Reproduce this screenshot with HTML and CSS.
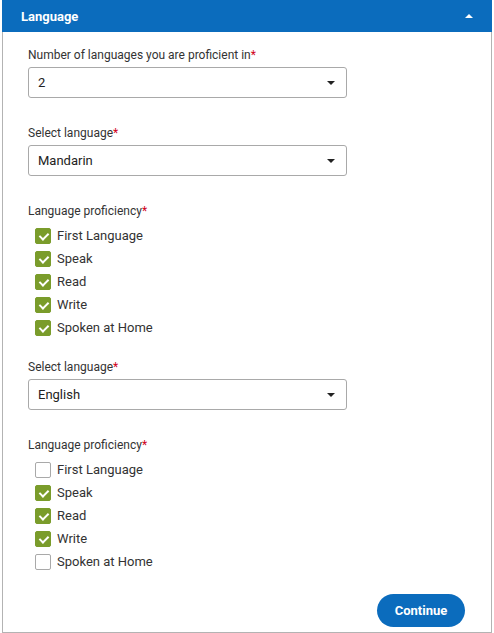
FILE: index.html
```html
<!DOCTYPE html>
<html lang="en">
<head>
<meta charset="utf-8">
<title>Language</title>
<link rel="stylesheet" href="styles.css">
</head>
<body>
<section class="panel">
  <header class="panel-head">
    <h2 class="panel-title">Language</h2>
    <span class="caret-up"></span>
  </header>
  <div class="panel-body">
    <div class="field">
      <label class="field-label">Number of languages you are proficient in<span class="req">*</span></label>
      <div class="select"><span>2</span><span class="caret-down"></span></div>
    </div>
    <div class="field">
      <label class="field-label">Select language<span class="req">*</span></label>
      <div class="select"><span>Mandarin</span><span class="caret-down"></span></div>
    </div>
    <div class="field field-checks">
      <label class="field-label">Language proficiency<span class="req">*</span></label>
      <ul class="checks">
        <li class="check"><span class="box on"></span>First Language</li>
        <li class="check"><span class="box on"></span>Speak</li>
        <li class="check"><span class="box on"></span>Read</li>
        <li class="check"><span class="box on"></span>Write</li>
        <li class="check"><span class="box on"></span>Spoken at Home</li>
      </ul>
    </div>
    <div class="field">
      <label class="field-label">Select language<span class="req">*</span></label>
      <div class="select"><span>English</span><span class="caret-down"></span></div>
    </div>
    <div class="field field-checks">
      <label class="field-label">Language proficiency<span class="req">*</span></label>
      <ul class="checks">
        <li class="check"><span class="box"></span>First Language</li>
        <li class="check"><span class="box on"></span>Speak</li>
        <li class="check"><span class="box on"></span>Read</li>
        <li class="check"><span class="box on"></span>Write</li>
        <li class="check"><span class="box"></span>Spoken at Home</li>
      </ul>
    </div>
    <div class="actions">
      <button class="btn">Continue</button>
    </div>
  </div>
</section>
</body>
</html>
```

FILE: styles.css
```css
html, body {
  margin: 0;
  padding: 0;
  background: #ffffff;
}
body {
  font-family: Roboto, "Liberation Sans", Arial, sans-serif;
  color: #333333;
  font-size: 13px;
}
.panel {
  margin-left: 2px;
  width: 490px;
  box-sizing: border-box;
  border-left: 1px solid #b3b3b3;
  border-right: 1px solid #b3b3b3;
  border-bottom: 1px solid #b3b3b3;
  min-height: 633px;
}
.panel-head {
  background: #0b6cbd;
  height: 32px;
  margin-left: -1px;
  margin-right: -1px;
  display: flex;
  align-items: center;
  justify-content: space-between;
  padding: 0 19px 0 19px;
  box-sizing: border-box;
}
.panel-title {
  margin: 0;
  color: #ffffff;
  font-size: 13px;
  font-weight: 700;
}
.caret-up {
  width: 0;
  height: 0;
  border-left: 4px solid transparent;
  border-right: 4px solid transparent;
  border-bottom: 4px solid #ffffff;
  margin-top: -1px;
}
.panel-body {
  padding: 16px 26px 0 25px;
}
.field {
  margin-bottom: 28px;
}
.field-label {
  display: block;
  font-size: 12px;
  line-height: 14px;
  margin-bottom: 5px;
  color: #333333;
}
.req {
  color: #d0021b;
}
.select {
  width: 319px;
  height: 31px;
  box-sizing: border-box;
  border: 1px solid #a9a9a9;
  border-radius: 3px;
  display: flex;
  align-items: center;
  justify-content: space-between;
  padding: 0 11px 0 9px;
  font-size: 13px;
  color: #222222;
}
.caret-down {
  width: 0;
  height: 0;
  border-left: 4px solid transparent;
  border-right: 4px solid transparent;
  border-top: 4px solid #222222;
}
.field-checks {
  margin-bottom: 21px;
}
.checks {
  list-style: none;
  margin: 6px 0 0 0;
  padding: 0 0 0 7px;
}
.check {
  display: flex;
  align-items: center;
  height: 23px;
  gap: 6px;
  color: #333333;
}
.box {
  width: 16px;
  height: 16px;
  box-sizing: border-box;
  border: 1px solid #a9a9a9;
  border-radius: 2px;
  background: #ffffff;
  position: relative;
}
.box.on {
  background: #7a9c2b;
  border-color: #7a9c2b;
}
.box.on::after {
  content: "";
  position: absolute;
  left: 5px;
  top: 2px;
  width: 4px;
  height: 7px;
  border-right: 2px solid #ffffff;
  border-bottom: 2px solid #ffffff;
  transform: rotate(45deg);
}
.actions {
  display: flex;
  justify-content: flex-end;
}
.btn {
  font-family: Roboto, "Liberation Sans", Arial, sans-serif;
  background: #0b6cbd;
  color: #ffffff;
  font-weight: 700;
  font-size: 13px;
  border: none;
  border-radius: 17px;
  width: 88px;
  height: 33px;
  padding: 0;
}
```
